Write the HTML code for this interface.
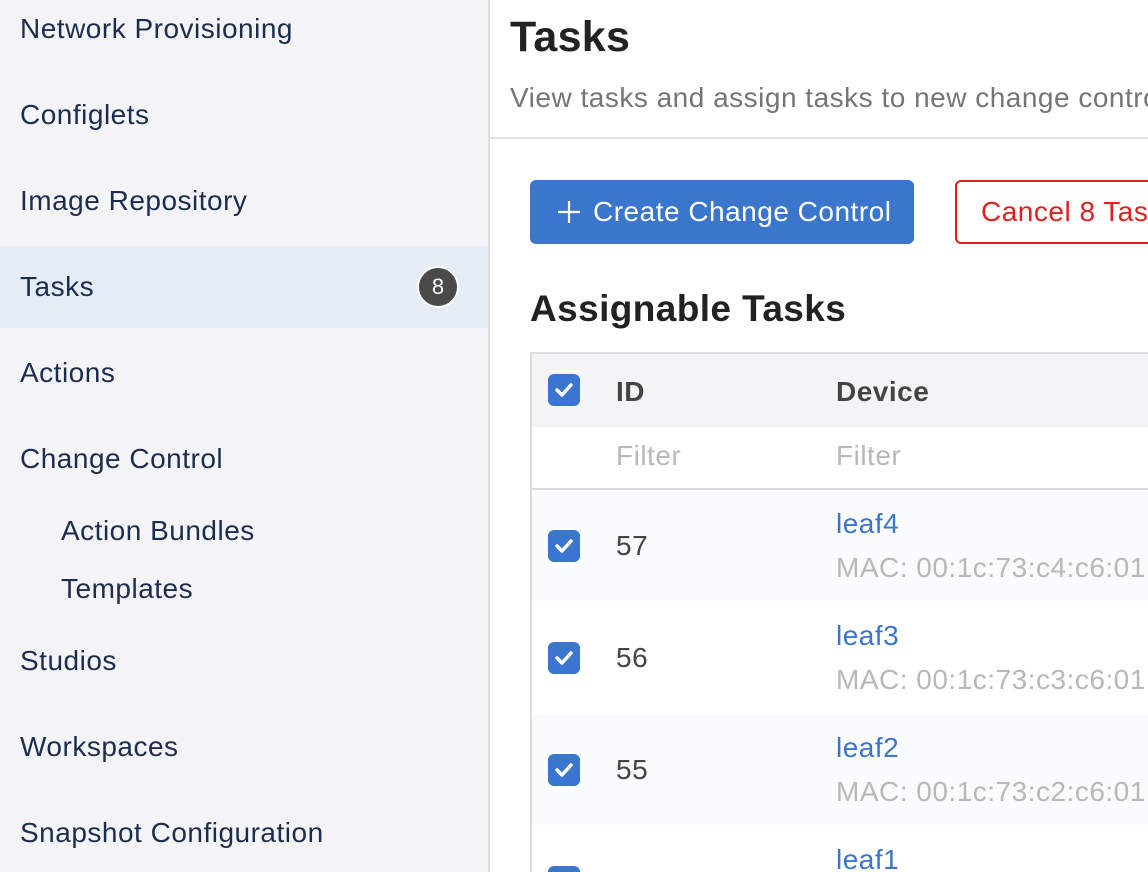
<!DOCTYPE html>
<html style="overflow:hidden;width:1148px;height:872px"><head><style>
*{margin:0;padding:0;box-sizing:border-box}
body{width:1148px;height:872px;overflow:hidden;font-family:"Liberation Sans",sans-serif;background:#fff;position:relative;letter-spacing:0.5px}
.side{position:absolute;left:0;top:0;width:490px;height:872px;background:#f4f4f7;border-right:2px solid #dcdde0}
.nav{position:absolute;left:20px;font-size:28px;color:#1b2d4f;transform:translateY(-50%);white-space:nowrap}
.sub{left:61px}
.act{position:absolute;left:0;top:246px;width:488px;height:82px;background:#e5ecf6}
.badge{position:absolute;left:417px;top:266px;width:42px;height:42px;border-radius:50%;background:#4a4a4a;border:2px solid #fff;color:#fff;font-size:22px;text-align:center;line-height:38px;letter-spacing:0}
.t{position:absolute;white-space:nowrap;font-size:28px}
.cb{position:absolute;left:548px;width:32px;height:32px;border-radius:6px;background:#3a76cf}
.cb svg{position:absolute;left:6px;top:7px}
</style></head><body>
<div class="side">
<div class="act"></div>
<div class="nav" style="top:29px">Network Provisioning</div>
<div class="nav" style="top:115px">Configlets</div>
<div class="nav" style="top:201px">Image Repository</div>
<div class="nav" style="top:287px">Tasks</div>
<div class="badge">8</div>
<div class="nav" style="top:373px">Actions</div>
<div class="nav" style="top:459px">Change Control</div>
<div class="nav sub" style="top:531px">Action Bundles</div>
<div class="nav sub" style="top:589px">Templates</div>
<div class="nav" style="top:661px">Studios</div>
<div class="nav" style="top:747px">Workspaces</div>
<div class="nav" style="top:833px">Snapshot Configuration</div>
</div>
<div class="t" style="left:510px;top:13px;font-size:43px;font-weight:bold;color:#222;letter-spacing:0.3px">Tasks</div>
<div class="t" style="left:510px;top:82px;color:#757575">View tasks and assign tasks to new change control</div>
<div style="position:absolute;left:490px;top:137px;width:658px;height:2px;background:#e0e0e0"></div>
<div style="position:absolute;left:530px;top:180px;width:384px;height:64px;border-radius:6px;background:#3a76cc;color:#fff;font-size:28px;line-height:64px;white-space:nowrap">
<svg style="position:absolute;left:27px;top:20px" width="24" height="24" viewBox="0 0 24 24"><path d="M12 1v22M1 12h22" stroke="#fff" stroke-width="2.2"/></svg>
<span style="position:absolute;left:63px;top:0">Create Change Control</span></div>
<div style="position:absolute;left:955px;top:180px;width:260px;height:64px;border-radius:6px;border:2px solid #e0201e;color:#e0201e;font-size:28px;line-height:60px;padding-left:24px;white-space:nowrap">Cancel 8 Tasks</div>
<div class="t" style="left:530px;top:288px;font-size:37px;font-weight:bold;color:#222;letter-spacing:0.4px">Assignable Tasks</div>
<div style="position:absolute;left:530px;top:352px;width:640px;height:520px;border:2px solid #dcdcdc;border-right:none;border-bottom:none;overflow:hidden">
<div style="height:73px;background:#f4f4f6"></div>
<div style="height:63px;background:#fff;border-bottom:2px solid #dcdcdc"></div>
<div style="height:112px;background:#fafbfc"></div>
<div style="height:112px;background:#fff"></div>
<div style="height:112px;background:#fafbfc"></div>
</div>
<div class="cb" style="top:374px"><svg width="20" height="18" viewBox="0 0 20 18"><path d="M3 9l5 5 9-10" stroke="#fff" stroke-width="3.5" fill="none" stroke-linecap="round" stroke-linejoin="round"/></svg></div>
<div class="t" style="left:616px;top:376px;font-weight:bold;color:#444">ID</div>
<div class="t" style="left:836px;top:376px;font-weight:bold;color:#444">Device</div>
<div class="t" style="left:616px;top:440px;color:#b8b8b8">Filter</div>
<div class="t" style="left:836px;top:440px;color:#b8b8b8">Filter</div>

<div class="cb" style="top:530px"><svg width="20" height="18" viewBox="0 0 20 18"><path d="M3 9l5 5 9-10" stroke="#fff" stroke-width="3.5" fill="none" stroke-linecap="round" stroke-linejoin="round"/></svg></div>
<div class="t" style="left:616px;top:530px;color:#444">57</div>
<div class="t" style="left:836px;top:508px;color:#3a76cc">leaf4</div>
<div class="t" style="left:836px;top:552px;color:#b8b8b8">MAC: 00:1c:73:c4:c6:01</div>

<div class="cb" style="top:642px"><svg width="20" height="18" viewBox="0 0 20 18"><path d="M3 9l5 5 9-10" stroke="#fff" stroke-width="3.5" fill="none" stroke-linecap="round" stroke-linejoin="round"/></svg></div>
<div class="t" style="left:616px;top:642px;color:#444">56</div>
<div class="t" style="left:836px;top:620px;color:#3a76cc">leaf3</div>
<div class="t" style="left:836px;top:664px;color:#b8b8b8">MAC: 00:1c:73:c3:c6:01</div>

<div class="cb" style="top:754px"><svg width="20" height="18" viewBox="0 0 20 18"><path d="M3 9l5 5 9-10" stroke="#fff" stroke-width="3.5" fill="none" stroke-linecap="round" stroke-linejoin="round"/></svg></div>
<div class="t" style="left:616px;top:754px;color:#444">55</div>
<div class="t" style="left:836px;top:732px;color:#3a76cc">leaf2</div>
<div class="t" style="left:836px;top:776px;color:#b8b8b8">MAC: 00:1c:73:c2:c6:01</div>

<div class="cb" style="top:866px;height:6px;border-radius:6px 6px 0 0"></div>
<div class="t" style="left:836px;top:844px;color:#3a76cc">leaf1</div>
</body></html>
